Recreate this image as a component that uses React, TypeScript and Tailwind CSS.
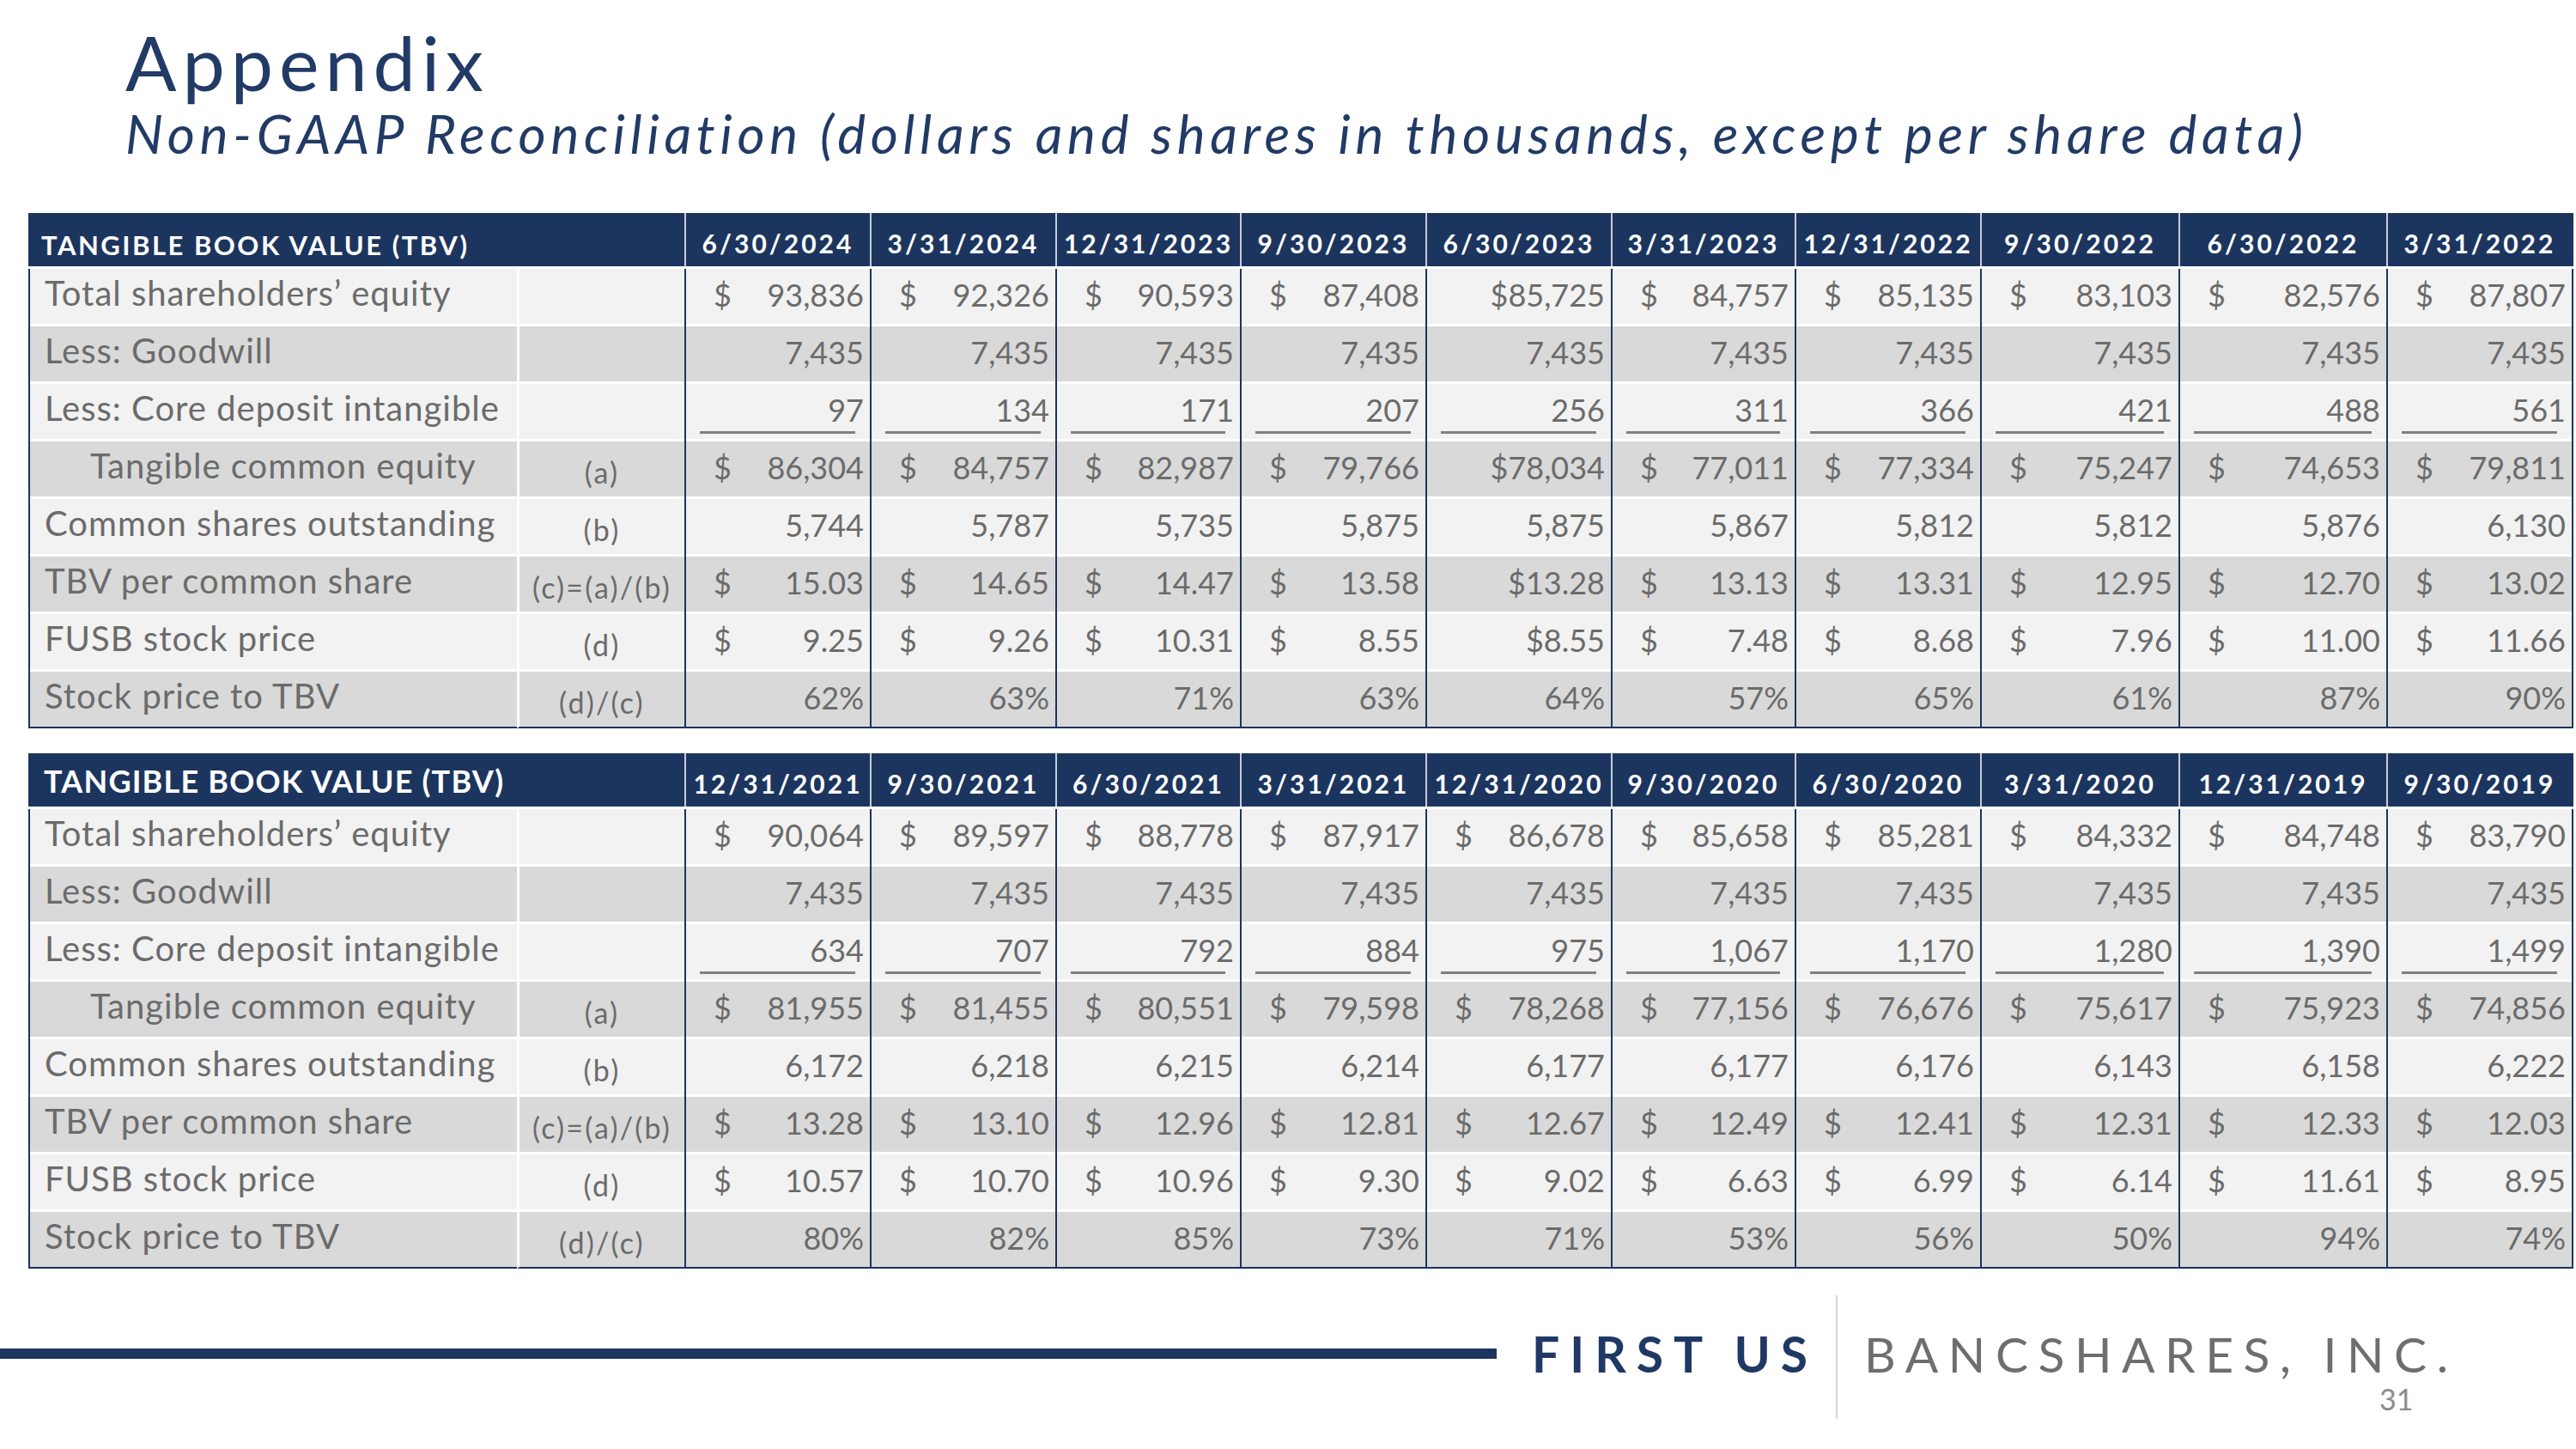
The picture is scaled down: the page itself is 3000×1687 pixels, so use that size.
import React from "react";

type Row = {
  label: string;
  note?: string;
  indent?: boolean;
  underline?: boolean;
  values: string[];
};

const table1Dates = ["6/30/2024", "3/31/2024", "12/31/2023", "9/30/2023", "6/30/2023", "3/31/2023", "12/31/2022", "9/30/2022", "6/30/2022", "3/31/2022"];

const table1Rows: Row[] = [
  { label: "Total shareholders\u2019 equity", values: ["$ 93,836", "$ 92,326", "$ 90,593", "$ 87,408", "$85,725", "$ 84,757", "$ 85,135", "$ 83,103", "$ 82,576", "$ 87,807"] },
  { label: "Less: Goodwill", values: Array(10).fill("7,435") },
  { label: "Less: Core deposit intangible", underline: true, values: ["97", "134", "171", "207", "256", "311", "366", "421", "488", "561"] },
  { label: "Tangible common equity", note: "(a)", indent: true, values: ["$ 86,304", "$ 84,757", "$ 82,987", "$ 79,766", "$78,034", "$ 77,011", "$ 77,334", "$ 75,247", "$ 74,653", "$ 79,811"] },
  { label: "Common shares outstanding", note: "(b)", values: ["5,744", "5,787", "5,735", "5,875", "5,875", "5,867", "5,812", "5,812", "5,876", "6,130"] },
  { label: "TBV per common share", note: "(c)=(a)/(b)", values: ["$ 15.03", "$ 14.65", "$ 14.47", "$ 13.58", "$13.28", "$ 13.13", "$ 13.31", "$ 12.95", "$ 12.70", "$ 13.02"] },
  { label: "FUSB stock price", note: "(d)", values: ["$ 9.25", "$ 9.26", "$ 10.31", "$ 8.55", "$8.55", "$ 7.48", "$ 8.68", "$ 7.96", "$ 11.00", "$ 11.66"] },
  { label: "Stock price to TBV", note: "(d)/(c)", values: ["62%", "63%", "71%", "63%", "64%", "57%", "65%", "61%", "87%", "90%"] },
];

const table2Dates = ["12/31/2021", "9/30/2021", "6/30/2021", "3/31/2021", "12/31/2020", "9/30/2020", "6/30/2020", "3/31/2020", "12/31/2019", "9/30/2019"];

const table2Rows: Row[] = [
  { label: "Total shareholders\u2019 equity", values: ["$ 90,064", "$ 89,597", "$ 88,778", "$ 87,917", "$ 86,678", "$ 85,658", "$ 85,281", "$ 84,332", "$ 84,748", "$ 83,790"] },
  { label: "Less: Goodwill", values: Array(10).fill("7,435") },
  { label: "Less: Core deposit intangible", underline: true, values: ["634", "707", "792", "884", "975", "1,067", "1,170", "1,280", "1,390", "1,499"] },
  { label: "Tangible common equity", note: "(a)", indent: true, values: ["$ 81,955", "$ 81,455", "$ 80,551", "$ 79,598", "$ 78,268", "$ 77,156", "$ 76,676", "$ 75,617", "$ 75,923", "$ 74,856"] },
  { label: "Common shares outstanding", note: "(b)", values: ["6,172", "6,218", "6,215", "6,214", "6,177", "6,177", "6,176", "6,143", "6,158", "6,222"] },
  { label: "TBV per common share", note: "(c)=(a)/(b)", values: ["$ 13.28", "$ 13.10", "$ 12.96", "$ 12.81", "$ 12.67", "$ 12.49", "$ 12.41", "$ 12.31", "$ 12.33", "$ 12.03"] },
  { label: "FUSB stock price", note: "(d)", values: ["$ 10.57", "$ 10.70", "$ 10.96", "$ 9.30", "$ 9.02", "$ 6.63", "$ 6.99", "$ 6.14", "$ 11.61", "$ 8.95"] },
  { label: "Stock price to TBV", note: "(d)/(c)", values: ["80%", "82%", "85%", "73%", "71%", "53%", "56%", "50%", "94%", "74%"] },
];

function ValueCell({ value, bg, last, lastCol, underline }: { value: string; bg: string; last: boolean; lastCol: boolean; underline?: boolean }) {
  const split = value.startsWith("$ ");
  return (
    <div className={`flex flex-col border-l-2 border-[#1c355e] ${lastCol ? "border-r-2" : ""} ${last ? "border-b-2" : ""}`}>
      <div className={`h-[64px] ${bg} flex flex-col`}>
        <div className={`flex ${split ? "justify-between" : "justify-end"} pl-[32px] pr-[7px] pt-[12px] text-[36px] leading-[36px] text-[#6b6b6b]`}>
          {split && <span>$</span>}
          <span>{split ? value.slice(2) : value}</span>
        </div>
        {underline && <div className="mt-[7px] ml-[16px] mr-[17px] h-[3px] bg-[#808080]" />}
      </div>
      {!last && <div className="h-[3px] bg-white" />}
    </div>
  );
}

function DataTable({ dates, rows, big }: { dates: string[]; rows: Row[]; big?: boolean }) {
  return (
    <div className="ml-[33px] w-[2964px] grid grid-cols-[569px_195px_216px_216px_215px_216px_216px_214px_216px_231px_242px_218px]">
      <div className="col-span-2 flex flex-col">
        <div className={`h-[62px] bg-[#1c355e] text-white font-bold whitespace-nowrap ${big ? "pl-[18px] pt-[14px] text-[36px] leading-[36px] tracking-[1.2px]" : "pl-[15px] pt-[22px] text-[31px] leading-[31px] tracking-[2.5px]"}`}>
          TANGIBLE BOOK VALUE (TBV)
        </div>
        <div className="h-[3px] bg-white" />
      </div>
      {dates.map((d, i) => (
        <div key={d} className="flex flex-col">
          <div className={`h-[62px] bg-[#1c355e] border-l-2 border-[#c5ccd8] ${i === dates.length - 1 ? "border-r-2 border-r-[#1c355e]" : ""} text-center text-white font-bold pt-[20px] text-[30px] leading-[30px] tracking-[3px]`}>
            {d}
          </div>
          <div className="h-[3px] bg-white" />
        </div>
      ))}
      {rows.map((r, ri) => {
        const bg = ri % 2 === 0 ? "bg-[#f2f2f2]" : "bg-[#d9d9d9]";
        const last = ri === rows.length - 1;
        return (
          <React.Fragment key={r.label}>
            <div className={`flex flex-col border-l-2 border-[#1c355e] ${last ? "border-b-2" : ""}`}>
              <div className={`h-[64px] ${bg} ${r.indent ? "pl-[70px]" : "pl-[17px]"} pt-[8px] text-[40px] leading-[40px] tracking-[1px] text-[#6b6b6b] whitespace-nowrap`}>
                {r.label}
              </div>
              {!last && <div className="h-[3px] bg-white" />}
            </div>
            <div className={`flex flex-col border-l-[3px] border-white ${last ? "border-b-2 border-b-[#1c355e]" : ""}`}>
              <div className={`h-[64px] ${bg} text-center pt-[19px] text-[34px] leading-[34px] tracking-[2.2px] text-[#6b6b6b] whitespace-nowrap`}>
                {r.note ?? ""}
              </div>
              {!last && <div className="h-[3px] bg-white" />}
            </div>
            {r.values.map((v, vi) => (
              <ValueCell key={vi} value={v} bg={bg} last={last} lastCol={vi === r.values.length - 1} underline={r.underline} />
            ))}
          </React.Fragment>
        );
      })}
    </div>
  );
}

export default function App() {
  return (
    <div className="relative w-[3000px] h-[1687px] overflow-hidden bg-white font-['Lato',sans-serif]">
      <div className="pl-[146px] pt-[28px] text-[#223a66]">
        <div className="text-[88px] leading-[88px] tracking-[7px]">Appendix</div>
        <div className="mt-[8px] text-[62px] leading-[62px] italic tracking-[5.7px] whitespace-nowrap">
          Non-GAAP Reconciliation (dollars and shares in thousands, except per share data)
        </div>
      </div>

      <div className="mt-[62px]">
        <DataTable dates={table1Dates} rows={table1Rows} />
      </div>
      <div className="mt-[29px]">
        <DataTable dates={table2Dates} rows={table2Rows} big />
      </div>

      <div className="mt-[29px] h-[148px] flex items-center">
        <div className="w-[1743px] h-[12px] mb-[8px] bg-[#1c355e]" />
        <div className="w-[395px] pl-[41px] mb-[8px] text-[57px] leading-[57px] font-bold tracking-[12px] text-[#1f3864] whitespace-nowrap">
          FIRST US
        </div>
        <div className="w-[2px] h-[144px] bg-[#d4d4d4]" />
        <div className="pl-[31px] mb-[8px] text-[57px] leading-[57px] tracking-[11.5px] text-[#6e6e6e] whitespace-nowrap">
          BANCSHARES, INC.
        </div>
      </div>

      <div className="absolute left-[2771px] top-[1612px] text-[34px] leading-[34px] text-[#8c8c8c]">31</div>
    </div>
  );
}
